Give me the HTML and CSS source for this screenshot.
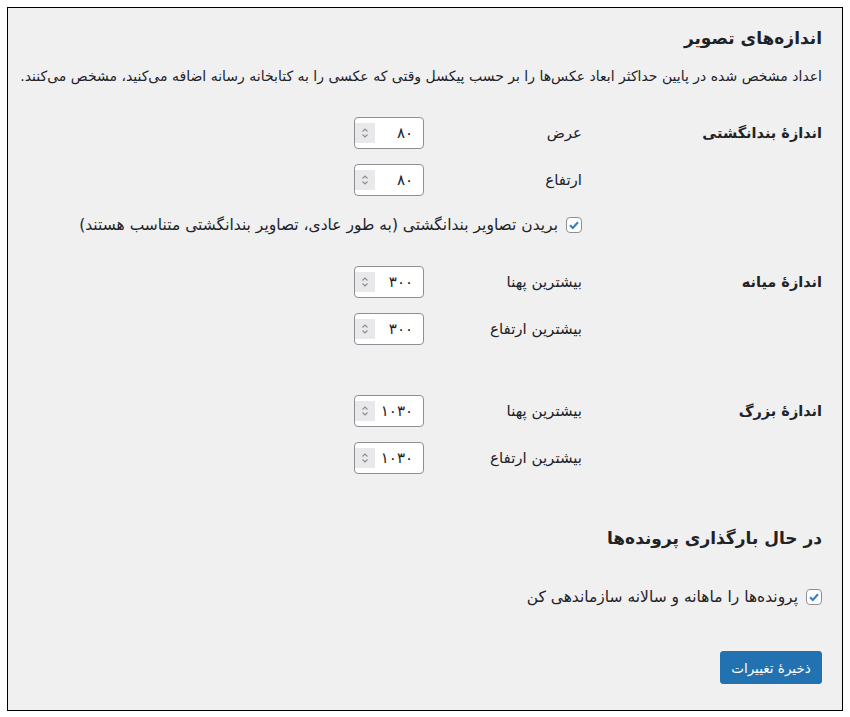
FILE: index.html
```html
<!DOCTYPE html>
<html lang="fa" dir="rtl">
<head>
    <meta charset="UTF-8">
    <meta name="viewport" content="width=device-width">
    <title>تنظیمات رسانه</title>
    <link rel="stylesheet" href="styles.css">
</head>
<body>
<div class="wrap">
    <h2 class="title">اندازه‌های تصویر</h2>
    <p class="desc">اعداد مشخص شده در پایین حداکثر ابعاد عکس‌ها را بر حسب پیکسل وقتی که عکسی را به کتابخانه رسانه اضافه می‌کنید، مشخص می‌کنند.</p>

    <div class="setting thumb">
        <div class="setting-name">اندازهٔ بندانگشتی</div>
        <div class="setting-fields">
            <div class="size-row">
                <label for="thumb_w">عرض</label>
                <div class="num"><input id="thumb_w" type="text" value="۸۰"><span class="spin"><svg width="20" height="20" viewBox="0 0 20 20"><path d="M7.5 8.5 L10 6 L12.5 8.5 M7.5 11.5 L10 14 L12.5 11.5" fill="none" stroke="#8a8c90" stroke-width="1.1"/></svg></span></div>
            </div>
            <div class="size-row">
                <label for="thumb_h">ارتفاع</label>
                <div class="num"><input id="thumb_h" type="text" value="۸۰"><span class="spin"><svg width="20" height="20" viewBox="0 0 20 20"><path d="M7.5 8.5 L10 6 L12.5 8.5 M7.5 11.5 L10 14 L12.5 11.5" fill="none" stroke="#8a8c90" stroke-width="1.1"/></svg></span></div>
            </div>
            <label class="check crop"><span class="box"><svg width="14" height="14" viewBox="0 0 14 14"><path d="M3 7.2 L5.8 10 L11 4.2" fill="none" stroke="#3582c4" stroke-width="2.2"/></svg></span>بریدن تصاویر بندانگشتی (به طور عادی، تصاویر بندانگشتی متناسب هستند)</label>
        </div>
    </div>

    <div class="setting medium">
        <div class="setting-name">اندازهٔ میانه</div>
        <div class="setting-fields">
            <div class="size-row">
                <label for="medium_w">بیشترین پهنا</label>
                <div class="num"><input id="medium_w" type="text" value="۳۰۰"><span class="spin"><svg width="20" height="20" viewBox="0 0 20 20"><path d="M7.5 8.5 L10 6 L12.5 8.5 M7.5 11.5 L10 14 L12.5 11.5" fill="none" stroke="#8a8c90" stroke-width="1.1"/></svg></span></div>
            </div>
            <div class="size-row">
                <label for="medium_h">بیشترین ارتفاع</label>
                <div class="num"><input id="medium_h" type="text" value="۳۰۰"><span class="spin"><svg width="20" height="20" viewBox="0 0 20 20"><path d="M7.5 8.5 L10 6 L12.5 8.5 M7.5 11.5 L10 14 L12.5 11.5" fill="none" stroke="#8a8c90" stroke-width="1.1"/></svg></span></div>
            </div>
        </div>
    </div>

    <div class="setting large">
        <div class="setting-name">اندازهٔ بزرگ</div>
        <div class="setting-fields">
            <div class="size-row">
                <label for="large_w">بیشترین پهنا</label>
                <div class="num"><input id="large_w" type="text" value="۱۰۳۰"><span class="spin"><svg width="20" height="20" viewBox="0 0 20 20"><path d="M7.5 8.5 L10 6 L12.5 8.5 M7.5 11.5 L10 14 L12.5 11.5" fill="none" stroke="#8a8c90" stroke-width="1.1"/></svg></span></div>
            </div>
            <div class="size-row">
                <label for="large_h">بیشترین ارتفاع</label>
                <div class="num"><input id="large_h" type="text" value="۱۰۳۰"><span class="spin"><svg width="20" height="20" viewBox="0 0 20 20"><path d="M7.5 8.5 L10 6 L12.5 8.5 M7.5 11.5 L10 14 L12.5 11.5" fill="none" stroke="#8a8c90" stroke-width="1.1"/></svg></span></div>
            </div>
        </div>
    </div>

    <h2 class="title uploads">در حال بارگذاری پرونده‌ها</h2>
    <label class="check organize"><span class="box"><svg width="14" height="14" viewBox="0 0 14 14"><path d="M3 7.2 L5.8 10 L11 4.2" fill="none" stroke="#3582c4" stroke-width="2.2"/></svg></span>پرونده‌ها را ماهانه و سالانه سازماندهی کن</label>

    <div class="submit">
        <button type="submit" class="button-primary">ذخیرهٔ تغییرات</button>
    </div>
</div>
</body>
</html>
```

FILE: styles.css
```css
/* media settings, rtl */

body {
    margin: 0;
    padding: 0;
    background: #fff;
    font-family: "DejaVu Sans", Tahoma, sans-serif;
    color: #1d2327;
}

.wrap {
    box-sizing: border-box;
    width: 836px;
    height: 704px;
    margin: 7px;
    padding: 0 20px 0 10px;
    border: 1px solid #000;
    background: #f0f0f1;
}

.title {
    margin: 18px 0 0;
    font-size: 17px;
    line-height: 24px;
    font-weight: 700;
}

.desc {
    margin: 16px 0 0;
    font-size: 14px;
    line-height: 20px;
    white-space: nowrap;
}

.setting {
    display: flex;
}

.setting.thumb {
    margin-top: 31px;
}

.setting.medium {
    margin-top: 31px;
}

.setting.large {
    margin-top: 35px;
}

.setting-name {
    width: 240px;
    flex: none;
    font-size: 14.5px;
    font-weight: 700;
    line-height: 32px;
}

.size-row {
    display: flex;
    align-items: center;
    height: 32px;
    margin-bottom: 15px;
}

.size-row label {
    width: 158px;
    flex: none;
    font-size: 15px;
}

.num {
    box-sizing: border-box;
    display: flex;
    align-items: center;
    width: 70px;
    height: 32px;
    padding: 0 1px 0 0;
    background: #fff;
    border: 1px solid #8c8f94;
    border-radius: 4px;
}

.num input {
    flex: 1;
    min-width: 0;
    border: none;
    background: none;
    padding: 0 9px 0 0;
    font-family: inherit;
    font-size: 15px;
    color: #1d2327;
    text-align: right;
    outline: none;
}

.spin {
    display: block;
    width: 20px;
    height: 20px;
    background: #e9e9eb;
}

.spin svg {
    display: block;
}

.check {
    display: flex;
    align-items: center;
    height: 20px;
    font-size: 15.5px;
}

.check.crop {
    margin-top: 19px;
}

.box {
    box-sizing: border-box;
    display: flex;
    align-items: center;
    justify-content: center;
    width: 16px;
    height: 16px;
    margin-left: 8px;
    background: #fff;
    border: 1px solid #8c8f94;
    border-radius: 4px;
}

.box svg {
    display: block;
}

.uploads {
    margin-top: 37px;
}

.check.organize {
    margin-top: 37px;
}

.submit {
    margin-top: 44px;
}

.button-primary {
    box-sizing: border-box;
    width: 102px;
    height: 33px;
    padding: 0;
    background: #2271b1;
    border: 1px solid #2271b1;
    border-radius: 3px;
    color: #fff;
    font-family: inherit;
    font-size: 13.5px;
    cursor: pointer;
}
```
